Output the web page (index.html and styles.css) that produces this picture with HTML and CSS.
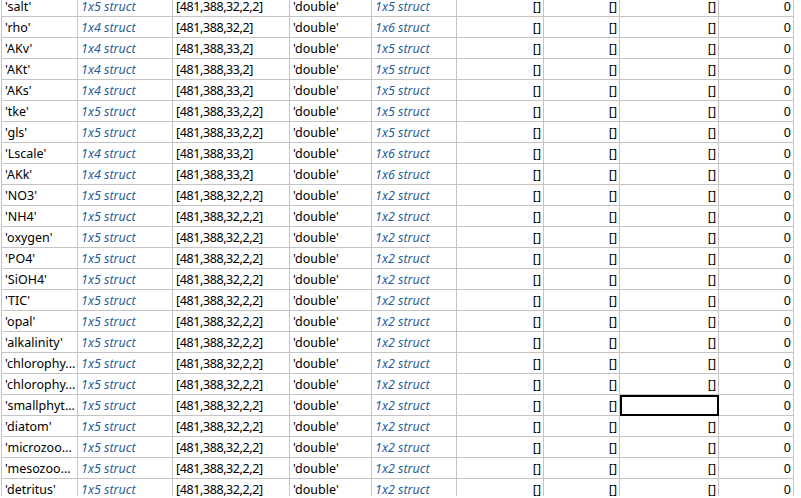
FILE: index.html
```html
<!DOCTYPE html>
<html lang="en">
<head>
    <meta charset="UTF-8">
    <meta name="viewport" content="width=device-width, initial-scale=1.0">
    <title>Variables - varinfo</title>
    <link rel="stylesheet" href="styles.css">
</head>
<body>
    <div class="sheet">
        <div id="grid" class="grid"></div>
    </div>

    <script>
        // name, struct size, dimensions, struct size 2
        const rows = [
            ["'salt'", "1x5", "[481,388,32,2,2]", "1x5"],
            ["'rho'", "1x4", "[481,388,32,2]", "1x6"],
            ["'AKv'", "1x4", "[481,388,33,2]", "1x5"],
            ["'AKt'", "1x4", "[481,388,33,2]", "1x5"],
            ["'AKs'", "1x4", "[481,388,33,2]", "1x5"],
            ["'tke'", "1x5", "[481,388,33,2,2]", "1x5"],
            ["'gls'", "1x5", "[481,388,33,2,2]", "1x5"],
            ["'Lscale'", "1x4", "[481,388,33,2]", "1x6"],
            ["'AKk'", "1x4", "[481,388,33,2]", "1x6"],
            ["'NO3'", "1x5", "[481,388,32,2,2]", "1x2"],
            ["'NH4'", "1x5", "[481,388,32,2,2]", "1x2"],
            ["'oxygen'", "1x5", "[481,388,32,2,2]", "1x2"],
            ["'PO4'", "1x5", "[481,388,32,2,2]", "1x2"],
            ["'SiOH4'", "1x5", "[481,388,32,2,2]", "1x2"],
            ["'TIC'", "1x5", "[481,388,32,2,2]", "1x2"],
            ["'opal'", "1x5", "[481,388,32,2,2]", "1x2"],
            ["'alkalinity'", "1x5", "[481,388,32,2,2]", "1x2"],
            ["'chlorophy...", "1x5", "[481,388,32,2,2]", "1x2"],
            ["'chlorophy...", "1x5", "[481,388,32,2,2]", "1x2"],
            ["'smallphyt...", "1x5", "[481,388,32,2,2]", "1x2"],
            ["'diatom'", "1x5", "[481,388,32,2,2]", "1x2"],
            ["'microzoo...", "1x5", "[481,388,32,2,2]", "1x2"],
            ["'mesozoo...", "1x5", "[481,388,32,2,2]", "1x2"],
            ["'detritus'", "1x5", "[481,388,32,2,2]", "1x2"]
        ];

        const grid = document.getElementById("grid");
        let html = "";

        rows.forEach(function (r, i) {
            let selected = (i === 19);
            html += '<div class="cell">' + r[0] + '</div>';
            html += '<div class="cell struct">' + r[1] + ' struct</div>';
            html += '<div class="cell dims">' + r[2] + '</div>';
            html += '<div class="cell">\'double\'</div>';
            html += '<div class="cell struct">' + r[3] + ' struct</div>';
            html += '<div class="cell num">[]</div>';
            html += '<div class="cell num">[]</div>';
            html += selected ? '<div class="cell num selected"></div>' : '<div class="cell num">[]</div>';
            html += '<div class="cell num">0</div>';
        });

        grid.innerHTML = html;
    </script>
</body>
</html>
```

FILE: styles.css
```css
body {
    margin: 0;
    background: #fff;
    font-family: "Noto Sans", "Noto Sans CJK SC", sans-serif;
    font-size: 12.5px;
    color: #000;
    overflow: hidden;
}
.sheet {
    height: 496px;
    overflow: hidden;
    padding-left: 1px;
}
.grid {
    display: grid;
    grid-template-columns: 76px 95px 117px 82px 85px 87px 76px 99px 75px;
    width: max-content;
    margin-top: -4px;
    border-left: 1px solid #c4c4c4;
}
.cell {
    box-sizing: border-box;
    height: 21px;
    line-height: 19px;
    padding: 1px 2px 0 3px;
    border-right: 1px solid #c4c4c4;
    border-bottom: 1px solid #c4c4c4;
    white-space: nowrap;
    overflow: hidden;
}
.struct {
    font-style: italic;
    color: #2c5f99;
}
.dims {
    letter-spacing: -0.4px;
}
.num {
    text-align: right;
}
.selected {
    outline: 2px solid #000;
    outline-offset: -2px;
}
```
